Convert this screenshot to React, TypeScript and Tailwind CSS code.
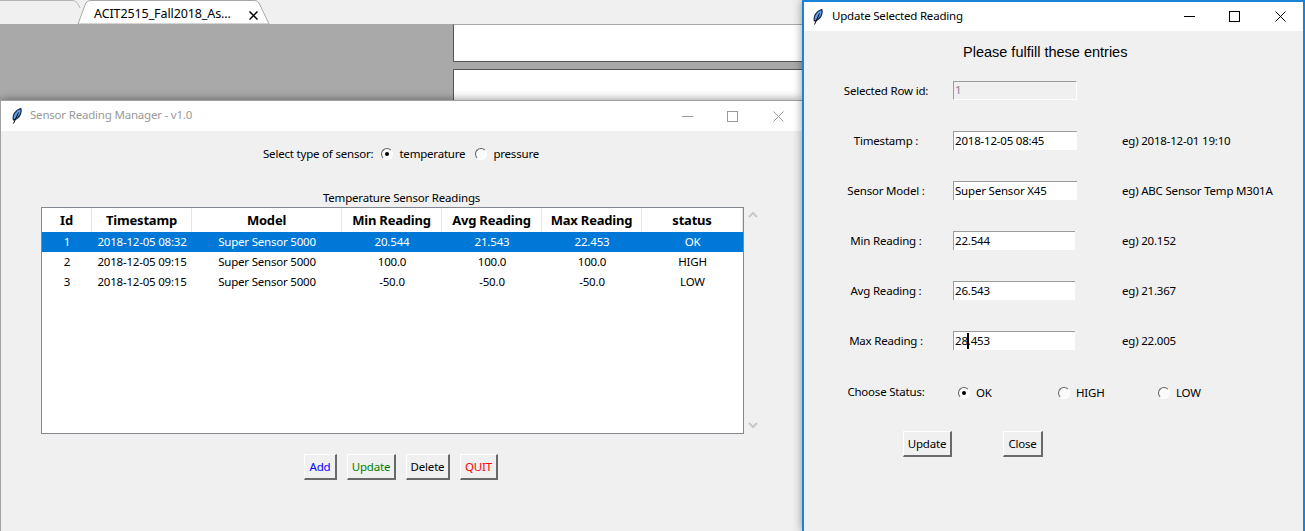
const font = "[font-family:'Noto_Sans',sans-serif]"
const small = "text-[11.5px] tracking-[-0.2px]"

const columns = [
  { name: "Id", width: "w-[50px]" },
  { name: "Timestamp", width: "w-[100px]" },
  { name: "Model", width: "w-[150px]" },
  { name: "Min Reading", width: "w-[100px]" },
  { name: "Avg Reading", width: "w-[100px]" },
  { name: "Max Reading", width: "w-[100px]" },
  { name: "status", width: "w-[101px]" },
]

const rows = [
  ["1", "2018-12-05 08:32", "Super Sensor 5000", "20.544", "21.543", "22.453", "OK"],
  ["2", "2018-12-05 09:15", "Super Sensor 5000", "100.0", "100.0", "100.0", "HIGH"],
  ["3", "2018-12-05 09:15", "Super Sensor 5000", "-50.0", "-50.0", "-50.0", "LOW"],
]

function Feather() {
  return (
    <svg width="10" height="16" viewBox="0 0 10 16" className="shrink-0">
      <path d="M1.500 12C.2 8 2.500 2.500 8.800 .5 10 5 7.500 10.500 1.500 12Z" fill="#5f9fe6" stroke="#12264a" strokeWidth="1.200" />
      <path d="M1.500 15.500 6.500 4.500" stroke="#000" strokeWidth="1" fill="none" />
    </svg>
  )
}

function WindowControls({ color }: { color: string }) {
  return (
    <div className="ml-auto flex items-center">
      <svg width="11" height="11" viewBox="0 0 11 11" className="mr-[34px]">
        <path d="M0 5.500H11" stroke={color} strokeWidth="1" />
      </svg>
      <svg width="11" height="11" viewBox="0 0 11 11" className="mr-[35px]">
        <rect x="0.5" y="0.5" width="10" height="10" fill="none" stroke={color} strokeWidth="1" />
      </svg>
      <svg width="11" height="11" viewBox="0 0 11 11">
        <path d="M0.5 0.5 10.500 10.500M10.500 0.5 0.5 10.500" fill="none" stroke={color} strokeWidth="1" />
      </svg>
    </div>
  )
}

function Radio({ checked }: { checked?: boolean }) {
  return (
    <span className="flex h-[12px] w-[12px] shrink-0 items-center justify-center rounded-full border-[1.5px] border-t-[#606060] border-r-white border-b-white border-l-[#606060] bg-[#fafafa]">
      {checked && <span className="h-[4px] w-[4px] rounded-full bg-black" />}
    </span>
  )
}

function TkButton({ label, className }: { label: string; className: string }) {
  return (
    <button
      className={`flex h-[26px] items-center justify-center border-t border-l border-t-white border-l-white border-r-2 border-b-2 border-r-[#696969] border-b-[#696969] bg-[#f0f0f0] ${small} ${className}`}
    >
      {label}
    </button>
  )
}

function Field({
  label,
  value,
  hint,
  width = "w-[124px]",
  disabled,
}: {
  label: string
  value: React.ReactNode
  hint?: string
  width?: string
  disabled?: boolean
}) {
  return (
    <div className="flex h-[50px] items-center">
      <span className={`ml-[24px] w-[116px] pt-[2px] text-center ${small}`}>{label}</span>
      <div className="ml-[9px] w-[124px]">
        <div
          className={`flex h-[19px] items-center border-t border-l border-t-[#9c9c9c] border-l-[#9c9c9c] pl-[1px] ${small} ${width} ${
            disabled ? "border-r border-b border-r-white border-b-white bg-[#f0f0f0] text-[#8a7f96]" : "bg-white text-black"
          }`}
        >
          {value}
        </div>
      </div>
      {hint && <span className={`ml-[45px] pt-[2px] ${small}`}>{hint}</span>}
    </div>
  )
}

function SensorManager() {
  return (
    <div className="absolute top-[100px] left-0 flex h-[431px] w-[802px] flex-col border-t border-l border-[#a0a0a0] bg-[#f0f0f0] shadow-[0_0_9px_rgba(0,0,0,0.45)]">
      <div className="flex h-[30px] items-center bg-white pr-[18px] pl-[11px]">
        <Feather />
        <span className={`ml-[8px] pb-[2px] text-[#999] ${small}`}>Sensor Reading Manager - v1.0</span>
        <WindowControls color="#999999" />
      </div>
      <div className={`mt-[14px] flex h-[18px] items-center pl-[262px] ${small}`}>
        <span>Select type of sensor:</span>
        <span className="ml-[8px]"><Radio checked /></span>
        <span className="ml-[6px]">temperature</span>
        <span className="ml-[10px]"><Radio /></span>
        <span className="ml-[6px]">pressure</span>
      </div>
      <div className={`mt-[26px] w-[801px] text-center ${small}`}>Temperature Sensor Readings</div>
      <div className="ml-[40px] flex">
        <div className="mt-[1px] h-[227px] w-[703px] border border-[#828790] bg-white">
          <div className="flex h-[24px]">
            {columns.map((c) => (
              <div
                key={c.name}
                className={`${c.width} flex items-center justify-center border-r border-[#e5e5e5] text-[13px] font-bold tracking-[-0.2px]`}
              >
                {c.name}
              </div>
            ))}
          </div>
          {rows.map((row, i) => (
            <div key={row[0]} className={`flex h-[20px] items-center pb-[1px] ${small} ${i === 0 ? "bg-[#0078d7] text-white" : ""}`}>
              {row.map((cell, j) => (
                <div key={j} className={`${columns[j].width} text-center`}>
                  {cell}
                </div>
              ))}
            </div>
          ))}
        </div>
        <div className="ml-[4px] flex flex-col justify-between py-[5px]">
          <svg width="10" height="8" viewBox="0 0 10 8">
            <path d="M1 6 5 2 9 6" fill="none" stroke="#c8c8c8" strokeWidth="2" />
          </svg>
          <svg width="10" height="8" viewBox="0 0 10 8">
            <path d="M1 2 5 6 9 2" fill="none" stroke="#c8c8c8" strokeWidth="2" />
          </svg>
        </div>
      </div>
      <div className="mt-[20px] ml-[303px] flex gap-[10px]">
        <TkButton label="Add" className="w-[33px] text-[#0000ff]" />
        <TkButton label="Update" className="w-[49px] text-[#008000]" />
        <TkButton label="Delete" className="w-[44px] text-black" />
        <TkButton label="QUIT" className="w-[38px] text-[#ff0000]" />
      </div>
    </div>
  )
}

function UpdateWindow() {
  return (
    <div className="absolute top-0 left-[802px] flex h-[531px] w-[503px] flex-col border-t-2 border-r-2 border-l-2 border-[#1883d7] bg-[#f0f0f0] shadow-[0_0_9px_rgba(0,0,0,0.4)]">
      <div className="flex h-[29px] items-center bg-white pr-[17px] pl-[9px]">
        <Feather />
        <span className={`ml-[9px] pb-[2px] ${small}`}>Update Selected Reading</span>
        <WindowControls color="#000000" />
      </div>
      <div className="flex h-[34px] items-center pt-[9px] pl-[159px] font-['Liberation_Sans',sans-serif] text-[14.5px]">
        Please fulfill these entries
      </div>
      <Field label="Selected Row id:" value="1" disabled />
      <Field label="Timestamp :" value="2018-12-05 08:45" hint="eg) 2018-12-01 19:10" />
      <Field label="Sensor Model :" value="Super Sensor X45" hint="eg) ABC Sensor Temp M301A" />
      <Field label="Min Reading :" value="22.544" width="w-[122px]" hint="eg) 20.152" />
      <Field label="Avg Reading :" value="26.543" width="w-[122px]" hint="eg) 21.367" />
      <Field
        label="Max Reading :"
        width="w-[122px]"
        hint="eg) 22.005"
        value={
          <span className="relative">
            28.453
            <span className="absolute top-[1px] left-[12px] h-[16px] w-[2px] bg-black" />
          </span>
        }
      />
      <div className={`flex h-[52px] items-center pt-[4px] ${small}`}>
        <span className="ml-[24px] w-[116px] pb-[2px] text-center">Choose Status:</span>
        <span className="ml-[14px]"><Radio checked /></span>
        <span className="ml-[6px] w-[82px]">OK</span>
        <Radio />
        <span className="ml-[6px] w-[82px]">HIGH</span>
        <Radio />
        <span className="ml-[6px]">LOW</span>
      </div>
      <div className="mt-[14px] ml-[99px] flex gap-[51px]">
        <TkButton label="Update" className="w-[49px]" />
        <TkButton label="Close" className="w-[40px]" />
      </div>
    </div>
  )
}

export default function App() {
  return (
    <div className={`relative h-[531px] w-[1305px] overflow-hidden bg-[#a9a9a9] text-black ${font}`}>
      {/* Browser tab strip */}
      <div className="relative flex h-[24px] bg-[#f0f0f0]">
        <svg width="280" height="24" viewBox="0 0 280 24" className="absolute top-0 left-0">
          <path d="M-2 .5H72C76 .5 78 3 80 8" fill="none" stroke="#b4b4b4" />
          <path d="M78 24 85 5C86 2 88 .5 91 .5H254C257 .5 259 2 260 5L269 24Z" fill="#fff" stroke="#a8a8a8" />
        </svg>
        <span className="relative mt-[5px] ml-[94px] text-[12.5px] leading-[18px] tracking-[-0.1px]">ACIT2515_Fall2018_As...</span>
        <svg width="9" height="9" viewBox="0 0 9 9" className="relative mt-[11px] ml-[18px]">
          <path d="M.5 .5 8.500 8.500M8.500 .5 .5 8.500" stroke="#000" strokeWidth="1.500" />
        </svg>
      </div>

      {/* Page behind the windows */}
      <div className="flex flex-col gap-[7px] pl-[453px]">
        <div className="h-[38px] border-t border-l border-b border-t-[#a8a8a8] border-l-[#555] border-b-[#555] bg-white" />
        <div className="h-[40px] border-t border-l border-t-[#555] border-l-[#555] bg-white" />
      </div>

      <SensorManager />
      <UpdateWindow />
    </div>
  )
}
